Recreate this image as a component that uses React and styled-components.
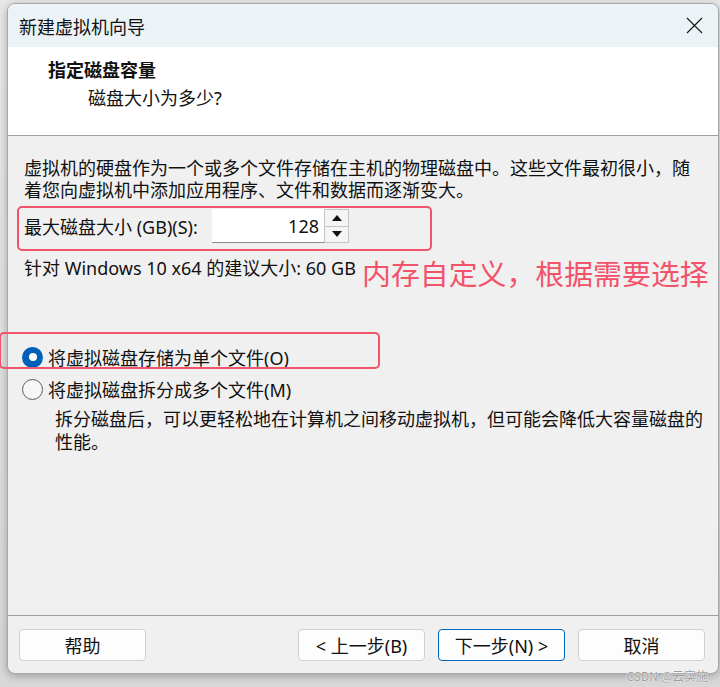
import styled, { createGlobalStyle } from 'styled-components';

const GlobalStyle = createGlobalStyle`
  html, body {
    margin: 0;
    padding: 0;
    background: #e2e2e2;
  }
  * {
    box-sizing: border-box;
  }
`;

const FONT = `"Noto Sans", "Noto Sans CJK SC", sans-serif`;
const RED = '#f2536a';

const Page = styled.div`
  position: relative;
  width: 720px;
  height: 687px;
  padding: 3px 0 0 7px;
  overflow: hidden;
  font-family: ${FONT};
  color: #111;
  background: linear-gradient(#e8e8e8, #d8d8d8);
`;

const Window = styled.div`
  width: 712px;
  height: 671px;
  display: flex;
  flex-direction: column;
  border: 1px solid #a8a8a8;
  border-radius: 8px;
  background: #f0f0f0;
  overflow: hidden;
  box-shadow: 0 2px 8px rgba(0, 0, 0, 0.28);
`;

const TitleBar = styled.div`
  height: 43px;
  flex: none;
  display: flex;
  align-items: center;
  justify-content: space-between;
  padding: 0 15px 0 11px;
  background: #ecf3f6;
  font-size: 18px;
`;

const Header = styled.div`
  height: 89px;
  flex: none;
  padding: 11px 0 0 40px;
  background: #fff;
  border-bottom: 1px solid #a0a0a0;
`;

const HeaderTitle = styled.div`
  font-size: 18px;
  line-height: 24px;
  font-weight: 700;
`;

const HeaderSub = styled.div`
  margin: 4px 0 0 40px;
  font-size: 18px;
  line-height: 24px;
`;

const Body = styled.div`
  flex: 1;
  padding: 21px 10px 0 16px;
  font-size: 18px;
  white-space: nowrap;
`;

const Paragraph = styled.p`
  margin: 0;
  line-height: 22px;
`;

const SizeRow = styled.div`
  display: flex;
  align-items: center;
  margin-top: 8px;
  height: 34px;
`;

const SizeLabel = styled.span`
  width: 188px;
`;

const SpinBox = styled.div`
  display: flex;
  height: 34px;
`;

const SpinInput = styled.div`
  width: 112px;
  padding-right: 5px;
  display: flex;
  align-items: center;
  justify-content: flex-end;
  background: #fff;
  border-bottom: 1px solid #8a8a8a;
`;

const SpinButtons = styled.div`
  width: 25px;
  display: flex;
  flex-direction: column;
  border: 1px solid #c4c4c4;
`;

const SpinButton = styled.div`
  flex: 1;
  display: flex;
  align-items: center;
  justify-content: center;
  background: #f5f5f5;
  border-top: ${(p) => (p.$down ? '1px solid #c4c4c4' : 'none')};
`;

const Recommend = styled.div`
  margin-top: 14px;
  line-height: 22px;
`;

const RadioGroup = styled.div`
  margin-top: 62px;
`;

const RadioRow = styled.label`
  display: flex;
  align-items: center;
  height: 32px;
  margin-left: -2px;
  gap: 5px;
`;

const RadioDot = styled.span`
  width: 21px;
  height: 21px;
  border-radius: 50%;
  flex: none;
  display: flex;
  align-items: center;
  justify-content: center;
  background: ${(p) => (p.$checked ? '#005fb8' : '#f6f6f6')};
  border: ${(p) => (p.$checked ? 'none' : '1px solid #5c5c5c')};

  &::after {
    content: '';
    display: ${(p) => (p.$checked ? 'block' : 'none')};
    width: 8px;
    height: 8px;
    border-radius: 50%;
    background: #fff;
  }
`;

const Description = styled.p`
  margin: 3px 0 0 31px;
  line-height: 23px;
`;

const Footer = styled.div`
  flex: none;
  display: flex;
  align-items: center;
  gap: 13px;
  padding: 13px 13px 12px 11px;
  border-top: 1px solid #a0a0a0;
`;

const Button = styled.div`
  width: 127px;
  height: 32px;
  display: flex;
  align-items: center;
  justify-content: center;
  font-size: 18px;
  background: #fdfdfd;
  border: 1px solid ${(p) => (p.$primary ? '#0067c0' : '#d0d0d0')};
  border-radius: 4px;
  margin-left: ${(p) => (p.$push ? 'auto' : '0')};
`;

const Highlight = styled.div`
  position: absolute;
  left: ${(p) => p.$x}px;
  top: ${(p) => p.$y}px;
  width: ${(p) => p.$w}px;
  height: ${(p) => p.$h}px;
  border: 2px solid ${RED};
  border-radius: 5px;
  pointer-events: none;
`;

const Note = styled.div`
  position: absolute;
  left: 362px;
  top: 252px;
  font-family: "Noto Sans CJK SC", sans-serif;
  font-size: 28.9px;
  line-height: 40px;
  color: ${RED};
  white-space: nowrap;
`;

const Watermark = styled.div`
  position: absolute;
  right: 12px;
  top: 667px;
  font-family: "Noto Sans CJK SC", sans-serif;
  font-size: 12px;
  color: #9c9c9c;
  text-shadow: 0 0 1px #fff, 0 0 2px #fff;
`;

const CloseIcon = () => (
  <svg width="17" height="17" viewBox="0 0 17 17">
    <path d="M1 1 L16 16 M16 1 L1 16" stroke="#1a1a1a" strokeWidth="1.2" fill="none" />
  </svg>
);

const Arrow = ({ down }) => (
  <svg width="10" height="6" viewBox="0 0 10 6">
    <path d={down ? 'M0 0 H10 L5 6 Z' : 'M0 6 H10 L5 0 Z'} fill="#111" />
  </svg>
);

export default function App() {
  return (
    <>
      <GlobalStyle />
      <Page>
        <Window>
          <TitleBar>
            <span>新建虚拟机向导</span>
            <CloseIcon />
          </TitleBar>
          <Header>
            <HeaderTitle>指定磁盘容量</HeaderTitle>
            <HeaderSub>磁盘大小为多少?</HeaderSub>
          </Header>
          <Body>
            <Paragraph>
              虚拟机的硬盘作为一个或多个文件存储在主机的物理磁盘中。这些文件最初很小，随
              <br />
              着您向虚拟机中添加应用程序、文件和数据而逐渐变大。
            </Paragraph>
            <SizeRow>
              <SizeLabel>最大磁盘大小 (GB)(S):</SizeLabel>
              <SpinBox>
                <SpinInput>128</SpinInput>
                <SpinButtons>
                  <SpinButton>
                    <Arrow />
                  </SpinButton>
                  <SpinButton $down>
                    <Arrow down />
                  </SpinButton>
                </SpinButtons>
              </SpinBox>
            </SizeRow>
            <Recommend>针对 Windows 10 x64 的建议大小: 60 GB</Recommend>
            <RadioGroup>
              <RadioRow>
                <RadioDot $checked />
                将虚拟磁盘存储为单个文件(O)
              </RadioRow>
              <RadioRow>
                <RadioDot />
                将虚拟磁盘拆分成多个文件(M)
              </RadioRow>
              <Description>
                拆分磁盘后，可以更轻松地在计算机之间移动虚拟机，但可能会降低大容量磁盘的
                <br />
                性能。
              </Description>
            </RadioGroup>
          </Body>
          <Footer>
            <Button>帮助</Button>
            <Button $push>&lt; 上一步(B)</Button>
            <Button $primary>下一步(N) &gt;</Button>
            <Button>取消</Button>
          </Footer>
        </Window>
        <Highlight $x={17} $y={206} $w={415} $h={45} />
        <Highlight $x={-1} $y={332} $w={381} $h={37} />
        <Note>内存自定义，根据需要选择</Note>
        <Watermark>CSDN @云实施</Watermark>
      </Page>
    </>
  );
}
